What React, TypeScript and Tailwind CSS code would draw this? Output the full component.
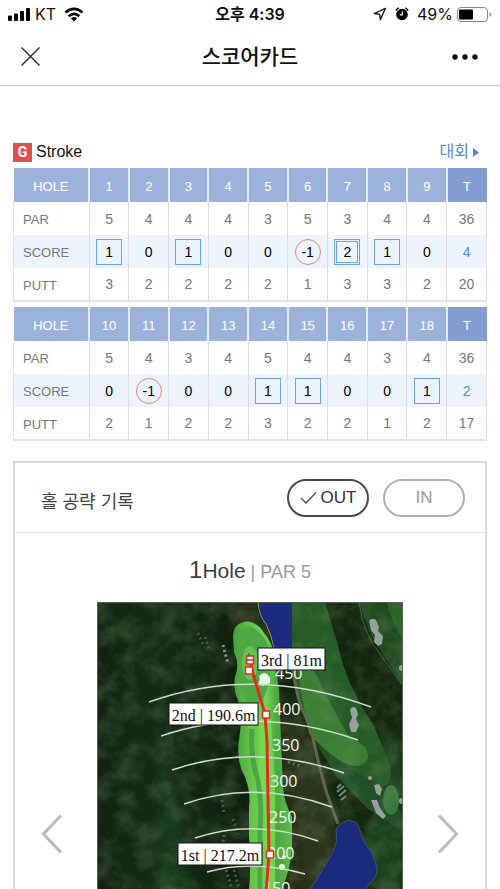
import clsx from "clsx";

type Mark = "box" | "double" | "circle" | null;

type Half = {
  name: string;
  holes: number[];
  par: number[];
  score: number[];
  putt: number[];
  totals: { par: number; score: number; putt: number };
};

const halves: Half[] = [
  {
    name: "OUT",
    holes: [1, 2, 3, 4, 5, 6, 7, 8, 9],
    par: [5, 4, 4, 4, 3, 5, 3, 4, 4],
    score: [1, 0, 1, 0, 0, -1, 2, 1, 0],
    putt: [3, 2, 2, 2, 2, 1, 3, 3, 2],
    totals: { par: 36, score: 4, putt: 20 },
  },
  {
    name: "IN",
    holes: [10, 11, 12, 13, 14, 15, 16, 17, 18],
    par: [5, 4, 3, 4, 5, 4, 4, 3, 4],
    score: [0, -1, 0, 0, 1, 1, 0, 0, 1],
    putt: [2, 1, 2, 2, 3, 2, 2, 1, 2],
    totals: { par: 36, score: 2, putt: 17 },
  },
];

const arcs = [
  "M52 100Q158 62 274 105",
  "M64 134Q157 102 261 138",
  "M75 168Q157 140 247 171",
  "M87 202Q158 177 235 205",
  "M98 236Q158 216 221 239",
  "M110 270Q155 257 208 272",
];

const distances = [
  { label: "450", x: 178, y: 77 },
  { label: "400", x: 176, y: 113 },
  { label: "350", x: 175, y: 149 },
  { label: "300", x: 173, y: 185 },
  { label: "250", x: 172, y: 221 },
  { label: "200", x: 170, y: 257 },
  { label: "150", x: 166, y: 292 },
];

const shots = [
  { label: "3rd | 81m", x: 161, y: 46, width: 67 },
  { label: "2nd | 190.6m", x: 72, y: 101, width: 89 },
  { label: "1st | 217.2m", x: 81, y: 241, width: 84 },
];

function markFor(score: number): Mark {
  if (score < 0) return "circle";
  if (score === 1) return "box";
  if (score > 1) return "double";
  return null;
}

function StatusBar() {
  return (
    <div className="grid grid-cols-3 items-center h-7 px-2 font-['Inter','Noto_Sans_CJK_KR',sans-serif] text-base text-[#111]">
      <div className="flex items-center gap-1">
        <svg width="23" height="14" viewBox="0 0 23 14" fill="#000">
          <rect x="0" y="8.500" width="4" height="5.500" rx="1" />
          <rect x="6" y="6.500" width="4" height="7.500" rx="1" />
          <rect x="12" y="4" width="4" height="10" rx="1" />
          <rect x="18" y="1" width="4" height="13" rx="1" />
        </svg>
        <span>KT</span>
        <svg className="ml-1" width="20" height="15" viewBox="0 0 20 15">
          <g fill="none" stroke="#000" strokeWidth="2.600">
            <path d="M1.500 5.600Q10-1.800 18.500 5.600" />
            <path d="M4.700 9.200Q10 4.600 15.300 9.200" />
          </g>
          <path d="M10 14.600 6.800 11.300Q10 8.600 13.200 11.300Z" />
        </svg>
      </div>
      <p className="text-center font-semibold whitespace-nowrap">오후 4:39</p>
      <div className="flex items-center justify-end whitespace-nowrap">
        <svg width="14" height="14" viewBox="0 0 14 14" fill="none" stroke="#111" strokeWidth="1.300" strokeLinejoin="round">
          <path d="M12.500 1.300 1.300 6.500l5.400.9.600 5.400Z" />
        </svg>
        <svg className="ml-2 mr-2" width="14" height="14" viewBox="0 0 14 14">
          <circle cx="7" cy="7.500" r="5.800" />
          <path d="M.900 3.600A8 8 0 0 1 3.800.900M13.100 3.600A8 8 0 0 0 10.200.900" stroke="#000" strokeWidth="1.600" fill="none" />
          <path d="M7.300 4.300v3.500H4.700" fill="none" stroke="#fff" strokeWidth="1.200" />
        </svg>
        <span>49%</span>
        <svg className="ml-1" width="35" height="15" viewBox="0 0 35 15">
          <rect x=".5" y=".5" width="30" height="14" rx="3.500" fill="#fff" stroke="#888" />
          <rect x="2" y="2.500" width="14" height="10" rx="1" />
          <path d="M32.500 5v5q1.800-.8 1.800-2.500T32.500 5" fill="#999" />
        </svg>
      </div>
    </div>
  );
}

function ScoreCell({ value }: { value: number }) {
  const mark = markFor(value);
  return (
    <span
      className={clsx(
        "mx-auto flex size-[26px] items-center justify-center",
        mark === "box" && "border border-[#6ba3e0]",
        mark === "double" && "border border-[#6ba3e0] p-px",
        mark === "circle" && "rounded-full border border-[#dc8a72]"
      )}
    >
      {mark === "double" ? (
        <span className="flex size-full items-center justify-center border border-[#6ba3e0]">
          {value}
        </span>
      ) : (
        value
      )}
    </span>
  );
}

function ScoreTable({ half }: { half: Half }) {
  const rows = [
    { label: "PAR", values: half.par, total: half.totals.par },
    { label: "SCORE", values: half.score, total: half.totals.score },
    { label: "PUTT", values: half.putt, total: half.totals.putt },
  ];

  return (
    <table
      aria-label={half.name}
      className="w-full table-fixed border-collapse border-b-2 border-[#e2e2e5] text-center text-sm text-[#75767d]"
    >
      <thead>
        <tr className="h-[34px] bg-[#9cb2db] text-[13px] text-white">
          <th className="w-[16%] pt-1 font-normal">HOLE</th>
          {half.holes.map((hole) => (
            <th key={hole} className="border-l-2 border-[#e6ecf7] pt-1 font-normal">
              {hole}
            </th>
          ))}
          <th className="border-l-2 border-[#e6ecf7] bg-[#819dd1] pt-1 font-normal">T</th>
        </tr>
      </thead>
      <tbody>
        {rows.map((row) => {
          const isScore = row.label === "SCORE";
          return (
            <tr key={row.label} className={clsx("h-[33px]", isScore && "bg-[#edf3fd]")}>
              <th className="border-l border-[#e2e2e5] pt-1 pl-[9px] text-left text-[13px] font-normal">
                {row.label}
              </th>
              {row.values.map((value, i) => (
                <td key={i} className={clsx("border-l border-[#dcdde2]", isScore && "text-black")}>
                  {isScore ? <ScoreCell value={value} /> : value}
                </td>
              ))}
              <td className={clsx("border-x border-[#dcdde2]", isScore && "text-[#4d8ddd]")}>
                {row.total}
              </td>
            </tr>
          );
        })}
      </tbody>
    </table>
  );
}

function CourseMap() {
  return (
    <svg className="w-[306px] shrink-0" viewBox="0 0 306 464">
      <defs>
        <linearGradient id="forest">
          <stop offset="0" stopColor="#10240f" />
          <stop offset=".2" stopColor="#142c17" />
          <stop offset=".45" stopColor="#0f210e" />
          <stop offset="1" stopColor="#16260f" />
        </linearGradient>
        <linearGradient id="fairway">
          <stop offset="0" stopColor="#479c3b" />
          <stop offset=".3" stopColor="#62c44a" />
          <stop offset=".55" stopColor="#72d352" />
          <stop offset=".75" stopColor="#4ba63e" />
          <stop offset="1" stopColor="#62bd4c" />
        </linearGradient>
        <filter id="grain" x="0" y="0" width="1" height="1">
          <feTurbulence type="fractalNoise" baseFrequency=".05" numOctaves="5" seed="11" />
          <feColorMatrix values="0 0 0 0 .2 0 0 0 0 .32 0 0 0 0 .16 1.200 0 0 0 -.45" />
        </filter>
        <filter id="soft">
          <feGaussianBlur stdDeviation="3" />
        </filter>
      </defs>

      <rect width="306" height="464" fill="url(#forest)" />

      <g filter="url(#soft)">
        <path d="M55 150Q70 190 62 240L48 464H85L92 250Q82 200 68 165Z" fill="#18381d" />
        <path d="M132 0H162L178 46L190 120L205 220L215 300V464H195L188 250L180 60L160 22L135 30Z" fill="#252f19" />
        <path d="M195 100L222 150L240 215L236 260L212 300L200 220L186 150Z" fill="#29351d" />
        <path d="M285 120L306 145V300H282L265 235L285 200Z" fill="#1a3f1b" />
      </g>

      {/* neighbouring holes on the right */}
      <path d="M195 0H228L240 40Q250 85 276 122L290 155Q300 180 284 186L268 178Q240 160 216 136L204 100Q192 75 194 46Z" fill="#245a26" />
      <path d="M199 58Q218 62 226 88L250 132L268 145Q276 159 262 164Q244 164 228 148L212 132L205 95Z" fill="#3a7d32" />
      <path d="M262 0H288L306 35V84L286 52Q270 28 262 0Z" fill="#1f4a20" />
      <path d="M289 0H306V38Q296 22 289 0Z" fill="#2d6529" />
      <path d="M262 0Q266 32 283 52L306 84" fill="none" stroke="#3b5c34" />
      <path d="M218 140L258 170L285 184L306 214V230L270 206L240 175Z" fill="#214e26" />
      <ellipse cx="294" cy="198" rx="8" ry="15" fill="#39783a" />

      {/* cart road */}
      <path d="M194 47Q196 80 204 105Q214 124 218 145Q224 172 230 192L241 222" fill="none" stroke="#5c6546" strokeWidth="3" />

      <rect width="306" height="464" filter="url(#grain)" opacity=".5" />

      {/* ponds */}
      <path d="M161 0H195V46H177Q175 32 170 23Q163 16 161 0Z" fill="#1c2a80" />
      <path d="M161 0Q162 14 169 22Q174 31 177 46" fill="none" stroke="#8b9571" />
      <path d="M251 218Q241 222 239 228Q241 240 236 250L220 277L205 300V340Q250 345 265 300Q269 282 276 278Q281 273 280 266L275 251L266 238Q262 223 258 220Z" fill="#1c2a7e" stroke="#3d5560" />

      {/* bunkers and rocks */}
      <g fill="#98a09b">
        <path d="M272 19Q275 15 279 18L282 25L281 29L286 34L285 42L281 44L277 40L278 33L274 28Z" />
        <path d="M253 108Q255 103 259 106L261 112L259 117L262 123L259 130L254 130L252 122L255 116Z" />
        <path d="M277 183L282 182L285 187L283 194L279 191Z" />
        <path d="M274 198L280 198L283 206L289 214L286 217L279 211Z" />
        <circle cx="273" cy="176" r="2" />
        <circle cx="305" cy="66" r="3" />
        <circle cx="305" cy="199" r="3" />
      </g>
      <path d="M244 182l-4 4m7-2l-7 6m9-2l-7 6m7 0l-5 4" stroke="#688e75" strokeWidth="2" />
      <g stroke="#46594a" strokeWidth="3" strokeDasharray="2 3" fill="none">
        <path d="M101 31L107 45M108 35L112 48" />
        <path d="M126 43L131 62" stroke="#859b8a" />
        <path d="M125 198L127 211M136 217L141 232M128 228L126 240M129 268L135 287M137 268L142 287" />
        <path d="M191 160L203 164" stroke="#606f4c" />
      </g>

      {/* fairway */}
      <path
        d="M136 35Q136 20 151 19.500Q162 21 167 31Q175 40 177 52L182 88L184 138L186 185Q187 200 195 215V246Q193 272 182 292V464H150V300Q155 275 152 235V205Q154 190 148 175Q139 160 142 138Q146 114 141 98Q136 88 138 75Q143 62 137 50Z"
        fill="url(#fairway)"
      />
      <path d="M139 38Q142 23 155 25Q172 35 173 53V78L165 101H150L142 82L146 63Z" fill="#4fa846" />
      <path d="M155 127Q153 155 161 178Q165 200 163 230V287" fill="none" stroke="#3f9941" strokeWidth="5" opacity=".7" />
      <path d="M162 110V170L168 210V287H178V180L173 105Z" fill="#78d950" opacity=".8" />
      <ellipse cx="153" cy="61" rx="8" ry="17" fill="#65c354" />

      <g fill="#e8f5e2">
        <path d="M162 74Q168 67 173 76L173 81L166 84Q159 82 163 78Z" />
        <circle cx="185" cy="265" r="3" />
        <circle cx="187" cy="255" r="2" />
      </g>

      <g fill="none" stroke="#cddccb" strokeWidth="1.500">
        {arcs.map((d) => (
          <path key={d} d={d} />
        ))}
      </g>

      <g fill="#f2f6ee" fontSize="16" className="font-['Open_Sans',sans-serif]">
        {distances.map((mark) => (
          <text key={mark.label} x={mark.x} y={mark.y}>
            {mark.label}
          </text>
        ))}
      </g>

      <path d="M153 56L155 68L168 112L170 140L172 252L169 290V464" fill="none" stroke="#e12c20" strokeWidth="3" />
      <g fill="#fff" stroke="#e12c20" strokeWidth="1.500">
        <path d="M152 51V57" />
        <rect x="149.500" y="54" width="7" height="7" />
        <rect x="149.500" y="58" width="7" height="4" />
        <rect x="148.500" y="65" width="7" height="7" />
        <rect x="165.500" y="109" width="7" height="7" />
        <rect x="169.500" y="249" width="7" height="7" />
      </g>

      <g fontSize="16" className="font-['Liberation_Serif',serif]">
        {shots.map((shot) => (
          <g key={shot.label}>
            <rect x={shot.x} y={shot.y} width={shot.width} height="22" fill="#fff" stroke="#111" />
            <text x={shot.x + shot.width / 2} y={shot.y + 18} textAnchor="middle" fill="#111">
              {shot.label}
            </text>
          </g>
        ))}
      </g>
      <rect x=".5" y=".5" width="305" height="463" fill="none" stroke="#54614f" />
    </svg>
  );
}

function HoleRecord() {
  return (
    <section className="mx-[13px] mt-5 border-2 border-[#d9d9db]">
      <div className="flex h-[70px] items-center justify-between border-b border-[#e8e8e8] pl-[26px] pr-5">
        <h2 className="pt-2 text-lg text-[#444]">홀 공략 기록</h2>
        <div className="flex gap-3.5 text-[17px]">
          <button className="flex h-[38px] w-[82px] items-center justify-center gap-1 rounded-full border-2 border-[#48484b] text-[#333]">
            <svg width="17" height="14" viewBox="0 0 17 14" fill="none" stroke="#555" strokeWidth="1.500">
              <path d="M1 7 6 12 16 1.500" />
            </svg>
            OUT
          </button>
          <button className="h-[38px] w-[82px] rounded-full border-2 border-[#b0b0b0] text-[#999]">
            IN
          </button>
        </div>
      </div>

      <h3 className="mt-[22px] mb-[15px] text-center text-[21px] leading-[30px] text-[#3b3d42]">
        <span className="text-2xl leading-[30px]">1</span>Hole
        <span className="text-lg leading-[30px] text-[#999]"> | PAR 5</span>
      </h3>

      <div className="flex items-center justify-between px-[26px]">
        <button aria-label="이전 홀">
          <svg width="22" height="40" viewBox="0 0 22 40" fill="none" stroke="#bbb" strokeWidth="3">
            <path d="M20 1.500 2.500 20 20 38.500" />
          </svg>
        </button>
        <CourseMap />
        <button aria-label="다음 홀">
          <svg width="22" height="40" viewBox="0 0 22 40" fill="none" stroke="#bbb" strokeWidth="3">
            <path d="M2 1.500 19.500 20 2 38.500" />
          </svg>
        </button>
      </div>
    </section>
  );
}

export default function App() {
  return (
    <div className="h-screen overflow-hidden bg-white font-['Liberation_Sans','Noto_Sans_CJK_KR',sans-serif]">
      <StatusBar />
      <header className="flex h-[58px] items-center justify-between border-b border-[#c4c4c4] px-5">
        <button aria-label="닫기" className="w-8">
          <svg width="21" height="21" viewBox="0 0 21 21" stroke="#222" strokeWidth="1.300">
            <path d="M1.500 1.500l18 18M19.500 1.500l-18 18" />
          </svg>
        </button>
        <h1 className="text-[21px] font-medium text-[#111]">스코어카드</h1>
        <button aria-label="더보기" className="flex w-8 justify-end">
          <svg width="28" height="6" viewBox="0 0 28 6" fill="#111">
            <circle cx="3" cy="3" r="2.700" />
            <circle cx="13" cy="3" r="2.700" />
            <circle cx="23" cy="3" r="2.700" />
          </svg>
        </button>
      </header>

      <main>
        <div className="mx-[13px] mt-[54px] mb-1 flex h-6 items-center justify-between">
          <div className="flex items-center gap-1">
            <span className="flex size-[19px] items-center justify-center bg-[#e04f4f] font-['Roboto',sans-serif] text-sm font-bold text-white">
              G
            </span>
            <span className="text-base text-[#111]">Stroke</span>
          </div>
          <a href="#games" className="flex items-center gap-1 pr-2 text-base text-[#5d87c5]">
            대회
            <svg width="6" height="9" viewBox="0 0 6 9" fill="currentColor">
              <path d="M0 0l6 4.500L0 9Z" />
            </svg>
          </a>
        </div>

        <div className="mx-[13px] flex flex-col gap-[5px]">
          {halves.map((half) => (
            <ScoreTable key={half.name} half={half} />
          ))}
        </div>

        <HoleRecord />
      </main>
    </div>
  );
}
